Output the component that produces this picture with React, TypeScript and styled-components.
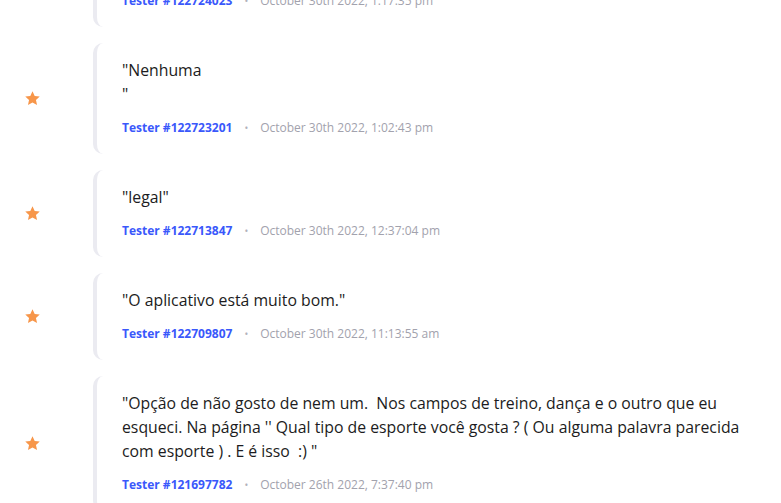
import React from "react";
import styled, { createGlobalStyle } from "styled-components";

const Global = createGlobalStyle`
  html, body { margin: 0; padding: 0; background: #ffffff; overflow: hidden; }
  body { font-family: "Open Sans", "Noto Sans", sans-serif; }
`;

const Feed = styled.div`
  display: flex;
  flex-direction: column;
  gap: 16px;
  margin-top: -60px;
  width: 756px;
`;

const Row = styled.div`
  display: flex;
  align-items: center;
`;

const StarCell = styled.div`
  width: 64px;
  flex: none;
  display: flex;
  justify-content: center;
  color: #f7964a;
`;

const Card = styled.div`
  flex: 1;
  margin-left: 29px;
  border-left: 4px solid #ebebf1;
  border-radius: 10px;
  padding: 15px 0 18px 25px;
`;

const Quote = styled.p`
  margin: 0;
  font-size: 15.8px;
  line-height: 24px;
  color: #1c1c21;
  white-space: pre-line;
`;

const Meta = styled.div`
  margin-top: 14px;
  display: flex;
  align-items: center;
  font-size: 12px;
  line-height: 16px;
`;

const Author = styled.span`
  font-weight: 700;
  color: #3a58fb;
`;

const Dot = styled.span`
  color: #b0b0ba;
  margin: 0 12px 0 12px;
  font-size: 10px;
`;

const DateText = styled.span`
  color: #a2a2ad;
`;

const Star = () => (
  <svg width="17" height="17" viewBox="0 0 24 24" fill="currentColor">
    <path d="M12 1.8l3.1 6.6 7.1.8-5.3 4.9 1.5 7.1L12 17.6l-6.4 3.6 1.5-7.1L1.8 9.2l7.1-.8z" />
  </svg>
);

const items = [
  { text: '"Ótimo"', tester: "122724023", date: "October 30th 2022, 1:17:35 pm" },
  { text: '"Nenhuma\n"', tester: "122723201", date: "October 30th 2022, 1:02:43 pm" },
  { text: '"legal"', tester: "122713847", date: "October 30th 2022, 12:37:04 pm" },
  { text: '"O aplicativo está muito bom."', tester: "122709807", date: "October 30th 2022, 11:13:55 am" },
  {
    text:
      '"Opção de não gosto de nem um.\u00a0 Nos campos de treino, dança e o outro que eu esqueci. Na página \'\' Qual tipo de esporte você gosta ? ( Ou alguma palavra parecida com esporte ) . E é isso\u00a0 :) "',
    tester: "121697782",
    date: "October 26th 2022, 7:37:40 pm",
  },
];

export default function App() {
  return (
    <>
      <Global />
      <Feed>
        {items.map((it) => (
          <Row key={it.tester}>
            <StarCell>
              <Star />
            </StarCell>
            <Card>
              <Quote>{it.text}</Quote>
              <Meta>
                <Author>Tester #{it.tester}</Author>
                <Dot>•</Dot>
                <DateText>{it.date}</DateText>
              </Meta>
            </Card>
          </Row>
        ))}
      </Feed>
    </>
  );
}
